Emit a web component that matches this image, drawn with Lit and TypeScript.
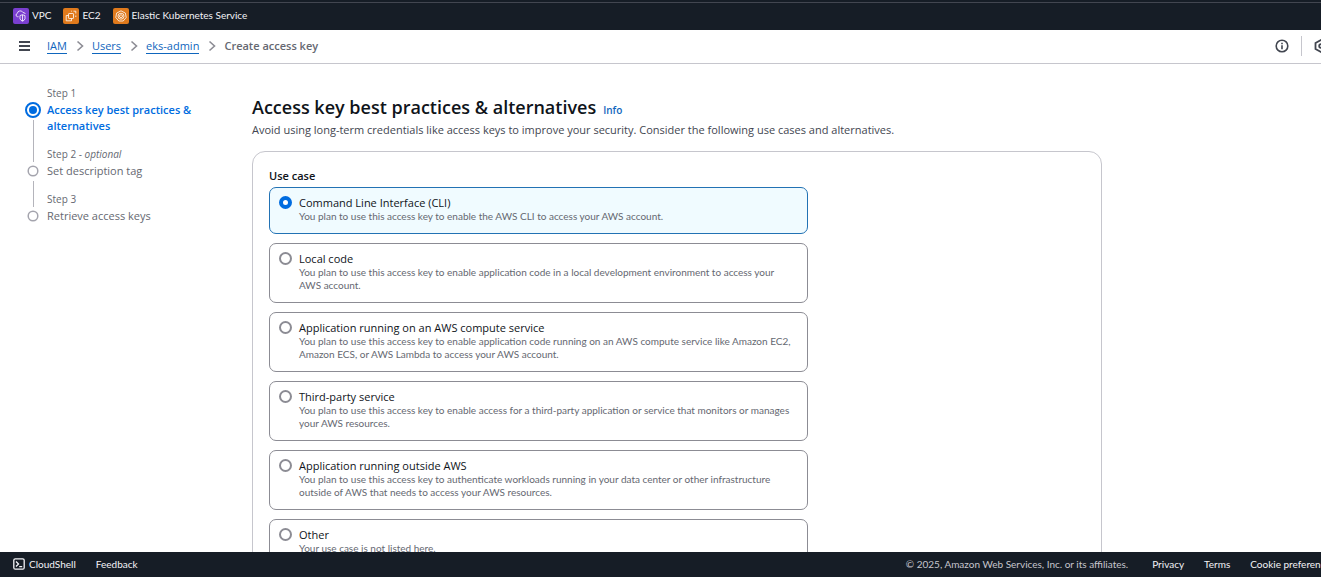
import { LitElement, html, css, svg } from "lit";
import { customElement, state } from "lit/decorators.js";
import { classMap } from "lit/directives/class-map.js";

interface UseCase {
  id: string;
  title: string;
  description: string;
}

const USE_CASES: UseCase[] = [
  { id: "cli", title: "Command Line Interface (CLI)", description: "You plan to use this access key to enable the AWS CLI to access your AWS account." },
  { id: "local", title: "Local code", description: "You plan to use this access key to enable application code in a local development environment to access your AWS account." },
  { id: "compute", title: "Application running on an AWS compute service", description: "You plan to use this access key to enable application code running on an AWS compute service like Amazon EC2, Amazon ECS, or AWS Lambda to access your AWS account." },
  { id: "third", title: "Third-party service", description: "You plan to use this access key to enable access for a third-party application or service that monitors or manages your AWS resources." },
  { id: "outside", title: "Application running outside AWS", description: "You plan to use this access key to authenticate workloads running in your data center or other infrastructure outside of AWS that needs to access your AWS resources." },
  { id: "other", title: "Other", description: "Your use case is not listed here." },
];

const STEPS = [
  { label: "Step 1", optional: false, title: "Access key best practices & alternatives" },
  { label: "Step 2", optional: true, title: "Set description tag" },
  { label: "Step 3", optional: false, title: "Retrieve access keys" },
];

const vpcGlyph = svg`<path d="M5.5 8.7H4.4A1.7 1.7 0 0 1 4.3 5.4 3 3 0 0 1 10 4.6 2 2 0 0 1 12.3 6"/><path d="M7 7.6q2.4-1.8 5 0v3.2q-.6 1.7-2.5 2.4Q7.6 12.5 7 10.8zM9.5 6.8v6.2"/>`;
const ec2Glyph = svg`<rect x="5.5" y="5.5" width="5" height="5" rx=".6"/><path d="M5.5 7.5H3.2v5.3h5.3v-2.3M8 3.2h.8M10.5 3.2h2.3v2.3M12.8 7.5v1.5"/>`;
const eksGlyph = svg`<path d="M8 2.8l4.4 2.3.8 4.400-3 3.500H5.800l-3-3.500.8-4.400z"/><circle cx="8" cy="8.2" r="3"/><path d="M8 6.700l1.400.8v1.500L8 9.800l-1.400-.8V7.500z"/>`;

const SERVICES = [
  { name: "VPC", tone: "purple", glyph: vpcGlyph },
  { name: "EC2", tone: "orange", glyph: ec2Glyph },
  { name: "Elastic Kubernetes Service", tone: "orange", glyph: eksGlyph },
];

@customElement("app-root")
export class AppRoot extends LitElement {
  @state() private selected = "cli";

  static styles = css`
    :host {
      --dense: Lato, "Noto Sans", sans-serif;
      display: block;
      height: 100vh;
      overflow: hidden;
      background: #fff;
      color: #0f141a;
      font-family: "Open Sans", "Noto Sans", sans-serif;
      font-size: 11px;
      line-height: 16px;
    }
    * { box-sizing: border-box; }
    a { color: inherit; text-decoration: none; }
    svg { display: block; flex: none; fill: none; stroke: currentColor; }
    .frame {
      display: flex;
      flex-direction: column;
      min-width: 1348px;
      height: 100%;
    }
    .services {
      flex: none;
      background: #161d26;
      color: #f3f3f7;
      padding-top: 2px;
    }
    .services-row {
      display: flex;
      gap: 12px;
      padding: 5px 13px 6px;
      border-top: 1px solid #424650;
    }
    .service {
      display: flex;
      align-items: center;
      gap: 3px;
      font-family: var(--dense);
      font-size: 10px;
      line-height: 14px;
    }
    .service span { padding-bottom: 2px; }
    .tile { border-radius: 2px; color: #fff; }
    .purple { background: #7a3fd0; }
    .orange { background: #e07a1c; }
    .crumbs-bar {
      flex: none;
      display: flex;
      align-items: center;
      justify-content: space-between;
      height: 34px;
      padding: 0 20px 1px 18px;
      border-bottom: 1px solid #c6c6cd;
    }
    .crumbs-left, .tools, .crumbs { display: flex; align-items: center; }
    .crumbs-left { gap: 16px; }
    .crumbs { list-style: none; margin: 0; padding: 0; gap: 8px; }
    .crumbs li { display: flex; align-items: center; gap: 9px; color: #656871; }
    .crumbs svg { color: #8c8c94; }
    .crumbs a { color: #0f66bd; border-bottom: 1px solid #0f66bd; line-height: 14px; }
    .crumbs .current { font-weight: 600; }
    .icon-button {
      display: block;
      border: 0;
      padding: 0;
      background: none;
      color: #424650;
    }
    .tools { gap: 12px; }
    .divider { width: 1px; height: 20px; background: #c6c6cd; }
    .body {
      flex: 1;
      min-height: 0;
      display: grid;
      grid-template-columns: 227px minmax(0, 850px);
      padding: 21px 25px 0;
      overflow: auto;
      scrollbar-width: none;
    }
    .steps { list-style: none; margin: 0; padding: 0; }
    .step {
      display: grid;
      grid-template-columns: 16px 150px;
      column-gap: 6px;
      color: #656871;
    }
    .step-label { font-size: 10px; }
    .step-title { padding: 1px 0 12px; }
    .step.active .step-title { color: #006ce0; font-weight: 600; }
    .rail { display: flex; flex-direction: column; align-items: center; gap: 2px; padding-top: 1px; }
    .line { flex: 1; width: 1px; background: #b4b4bb; }
    .rail-top { padding: 0; }
    .marker { color: #a4a4ad; }
    .active .marker { color: #006ce0; }
    .heading { display: flex; align-items: baseline; gap: 7px; margin-top: 10px; }
    h1 { margin: 0; font-size: 18px; line-height: 24px; font-weight: 600; }
    .info { color: #0f66bd; font-size: 10px; font-weight: 600; }
    .lead { margin: 3px 0 13px; color: #424650; }
    .panel {
      border: 1px solid #c6c6cd;
      border-radius: 13px;
      padding: 16px;
    }
    .choices {
      display: flex;
      flex-direction: column;
      gap: 9px;
      width: 66%;
      margin: 0;
      padding: 0;
      border: 0;
    }
    legend { padding: 0 0 3px; font-weight: 600; font-size: 11px; }
    .choice {
      display: flex;
      gap: 7px;
      padding: 8px 9px 10px;
      border: 1px solid #8c8c94;
      border-radius: 7px;
    }
    .choice.on { background: #f0fbff; border-color: #2272b4; }
    input {
      appearance: none;
      flex: none;
      width: 13px;
      height: 13px;
      margin: 0;
      border: 2px solid #8c8c94;
      border-radius: 50%;
      background: #fff;
    }
    input:checked { border: 4px solid #006ce0; }
    .choice-title { display: block; line-height: 14px; }
    .choice-text { display: block; color: #656871; font-family: var(--dense); font-size: 10px; line-height: 13px; }
    .footer {
      flex: none;
      display: flex;
      align-items: center;
      justify-content: space-between;
      height: 25px;
      padding: 0 13px 1px;
      background: #161d26;
      color: #f3f3f7;
      font-family: var(--dense);
      font-size: 10px;
    }
    .footer-group { display: flex; align-items: center; gap: 20px; }
    .shell { display: flex; align-items: center; gap: 4px; }
    .legal { color: #c6c6cd; margin-right: 4px; }
  `;

  private chevron() {
    return html`<svg width="8" height="12" viewBox="0 0 8 12" stroke-width="1.6" aria-hidden="true"><path d="M1.5 1.5L6.5 6l-5 4.5"/></svg>`;
  }

  private marker(active: boolean) {
    return html`<svg class="marker" width="16" height="16" viewBox="0 0 16 16" stroke-width="2">
      ${active
        ? svg`<circle cx="8" cy="8" r="7"/><circle cx="8" cy="8" r="4" fill="currentColor" stroke="none"/>`
        : svg`<circle cx="8" cy="8" r="4.8" stroke-width="1.5"/>`}
    </svg>`;
  }

  render() {
    return html`
      <div class="frame">
        <nav class="services" aria-label="Favorite services">
          <div class="services-row">
            ${SERVICES.map((s) => html`
              <a class="service" href="#">
                <svg class="tile ${s.tone}" width="16" height="16" viewBox="0 0 16 16" stroke-width=".8">${s.glyph}</svg>
                <span>${s.name}</span>
              </a>`)}
          </div>
        </nav>
        <header class="crumbs-bar">
          <div class="crumbs-left">
            <button class="icon-button" aria-label="Open navigation">
              <svg width="13" height="12" viewBox="0 0 13 12" stroke-width="2"><path d="M1 2h11M1 6h11M1 10h11"/></svg>
            </button>
            <ol class="crumbs">
              ${["IAM", "Users", "eks-admin"].map((c) => html`<li><a href="#">${c}</a>${this.chevron()}</li>`)}
              <li class="current">Create access key</li>
            </ol>
          </div>
          <div class="tools">
            <button class="icon-button" aria-label="Info">
              <svg width="14" height="14" viewBox="0 0 14 14" stroke-width="1.6"><circle cx="7" cy="7" r="5.8"/><path d="M7 6.2v4M7 3.7v1.5"/></svg>
            </button>
            <span class="divider"></span>
            <button class="icon-button" aria-label="Settings">
              <svg width="14" height="14" viewBox="0 0 14 14" stroke-width="1.8"><path d="M7 1l5.5 3v6L7 13l-5.5-3V4z"/><circle cx="7" cy="7" r="1.8"/></svg>
            </button>
          </div>
        </header>
        <div class="body">
          <ol class="steps">
            ${STEPS.map((s, i) => html`
              <li class=${classMap({ step: true, active: i === 0 })}>
                <span class="rail rail-top">${i > 0 ? html`<span class="line"></span>` : ""}</span>
                <span class="step-label">${s.label}${s.optional ? html` - <em>optional</em>` : ""}</span>
                <span class="rail">${this.marker(i === 0)}${i < STEPS.length - 1 ? html`<span class="line"></span>` : ""}</span>
                <span class="step-title">${s.title}</span>
              </li>`)}
          </ol>
          <main>
            <div class="heading">
              <h1>Access key best practices &amp; alternatives</h1>
              <a class="info" href="#">Info</a>
            </div>
            <p class="lead">Avoid using long-term credentials like access keys to improve your security. Consider the following use cases and alternatives.</p>
            <section class="panel">
              <fieldset class="choices">
                <legend>Use case</legend>
                ${USE_CASES.map((u) => html`
                  <label class=${classMap({ choice: true, on: this.selected === u.id })} for=${u.id}>
                    <input type="radio" name="use-case" id=${u.id} .checked=${this.selected === u.id} @change=${() => (this.selected = u.id)} />
                    <span>
                      <span class="choice-title">${u.title}</span>
                      <span class="choice-text">${u.description}</span>
                    </span>
                  </label>`)}
              </fieldset>
            </section>
          </main>
        </div>
        <footer class="footer">
          <div class="footer-group">
            <a class="shell" href="#">
              <svg width="12" height="12" viewBox="0 0 12 12" stroke-width="1.3"><rect x=".8" y=".8" width="10.4" height="10.4" rx="1.5"/><path d="M3 3.5L5.5 6 3 8.5M6.2 8.7h3"/></svg>
              <span>CloudShell</span>
            </a>
            <a href="#">Feedback</a>
          </div>
          <div class="footer-group">
            <span class="legal">© 2025, Amazon Web Services, Inc. or its affiliates.</span>
            <a href="#">Privacy</a>
            <a href="#">Terms</a>
            <a href="#">Cookie preferences</a>
          </div>
        </footer>
      </div>
    `;
  }
}
